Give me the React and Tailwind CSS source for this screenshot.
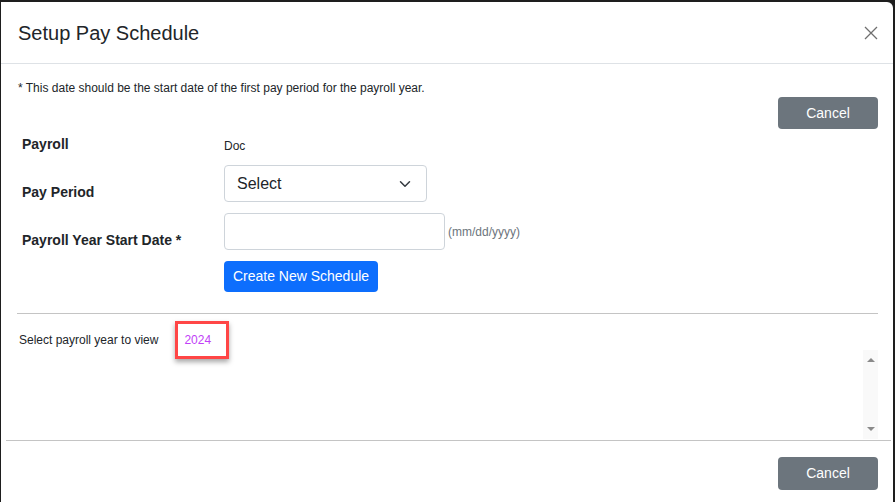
import React from 'react';

const CloseIcon = () => (
  <svg width="14" height="14" viewBox="0 0 14 14" fill="none">
    <path d="M1 1L13 13M13 1L1 13" stroke="#6f6f6f" strokeWidth="1.3" />
  </svg>
);

const Chevron = () => (
  <svg width="12" height="12" viewBox="0 0 16 16" fill="none">
    <path d="M2 5l6 6 6-6" stroke="#343a40" strokeWidth="2" strokeLinecap="round" strokeLinejoin="round" />
  </svg>
);

const FormRow = ({ label, children, align = 'items-end' }) => (
  <div className={`flex ${align}`}>
    <div className="w-[223px] shrink-0 pl-[21px] text-[14px] font-bold leading-[20px] text-[#212529]">
      {label}
    </div>
    {children}
  </div>
);

export default function App() {
  return (
    <div
      className="w-[895px] h-[502px] overflow-hidden bg-[#1e1e1e] pt-[2px] pl-[1px] pr-[2px]"
      style={{ fontFamily: '"Liberation Sans", Arial, sans-serif' }}
    >
      <div className="h-full bg-white rounded-tr-md flex flex-col">
        {/* Header */}
        <div className="h-[62px] shrink-0 border-b border-[#dee2e6] flex items-center justify-between pl-[17px] pr-[14px]">
          <h1 className="text-[20px] leading-[24px] text-[#212529]">Setup Pay Schedule</h1>
          <button className="w-[16px] h-[16px] flex items-center justify-center" aria-label="Close">
            <CloseIcon />
          </button>
        </div>

        {/* Body */}
        <div className="mt-[16px] pl-[17px] text-[12px] leading-[16px] text-[#212529]">
          * This date should be the start date of the first pay period for the payroll year.
        </div>
        <div className="mt-[1px] flex justify-end pr-[15px]">
          <button className="w-[100px] h-[32px] rounded-[4px] bg-[#6c757d] text-white text-[14px]">Cancel</button>
        </div>

        <div className="mt-[5px] flex flex-col">
          <FormRow label="Payroll" align="items-center">
            <span className="pt-[3px] text-[12px] leading-[16px] text-[#212529]">Doc</span>
          </FormRow>

          <div className="mt-[11px]">
            <FormRow label="Pay Period">
              <div className="w-[203px] h-[37px] rounded-[4px] border border-[#ced4da] flex items-center justify-between pl-[12px] pr-[15px]">
                <span className="text-[16px] text-[#212529]">Select</span>
                <Chevron />
              </div>
            </FormRow>
          </div>

          <div className="mt-[11px]">
            <FormRow label="Payroll Year Start Date *">
              <div className="flex items-center self-stretch">
                <div className="w-[221px] h-[37px] rounded-[4px] border border-[#ced4da]" />
                <span className="ml-[3px] text-[12px] text-[#6c757d]">(mm/dd/yyyy)</span>
              </div>
            </FormRow>
          </div>

          <div className="mt-[11px] pl-[223px]">
            <button className="w-[154px] h-[31px] rounded-[4px] bg-[#0d6efd] text-white text-[14px]">
              Create New Schedule
            </button>
          </div>
        </div>

        <div className="mt-[21px] ml-[16px] mr-[15px] border-t border-[#c4c4c4]" />

        {/* Year list */}
        <div className="h-[126px] flex pr-[15px]">
          <div className="flex-1 pl-[18px] pt-[7px]">
            <div className="flex items-center">
              <span className="text-[12px] text-[#212529]">Select payroll year to view</span>
              <div className="ml-[17px] w-[54px] h-[38px] border-[3px] border-[#ff4646] flex items-center pl-[6px] shadow-[0_3px_5px_rgba(0,0,0,0.35)]">
                <span className="text-[12px] text-[#c13ff7]">2024</span>
              </div>
            </div>
          </div>
          <div className="mt-[36px] mb-[1px] w-[15px] bg-[#f9f9f9] flex flex-col justify-between items-center py-[8px]">
            <div className="w-0 h-0 border-l-[4px] border-r-[4px] border-b-[4px] border-l-transparent border-r-transparent border-b-[#8a8a8a]" />
            <div className="w-0 h-0 border-l-[4px] border-r-[4px] border-t-[4px] border-l-transparent border-r-transparent border-t-[#8a8a8a]" />
          </div>
        </div>

        <div className="ml-[5px] mr-[2px] border-t border-[#c4c4c4]" />

        {/* Footer */}
        <div className="mt-[16px] flex justify-end pr-[15px]">
          <button className="w-[100px] h-[33px] rounded-[4px] bg-[#6c757d] text-white text-[14px]">Cancel</button>
        </div>
      </div>
    </div>
  );
}
